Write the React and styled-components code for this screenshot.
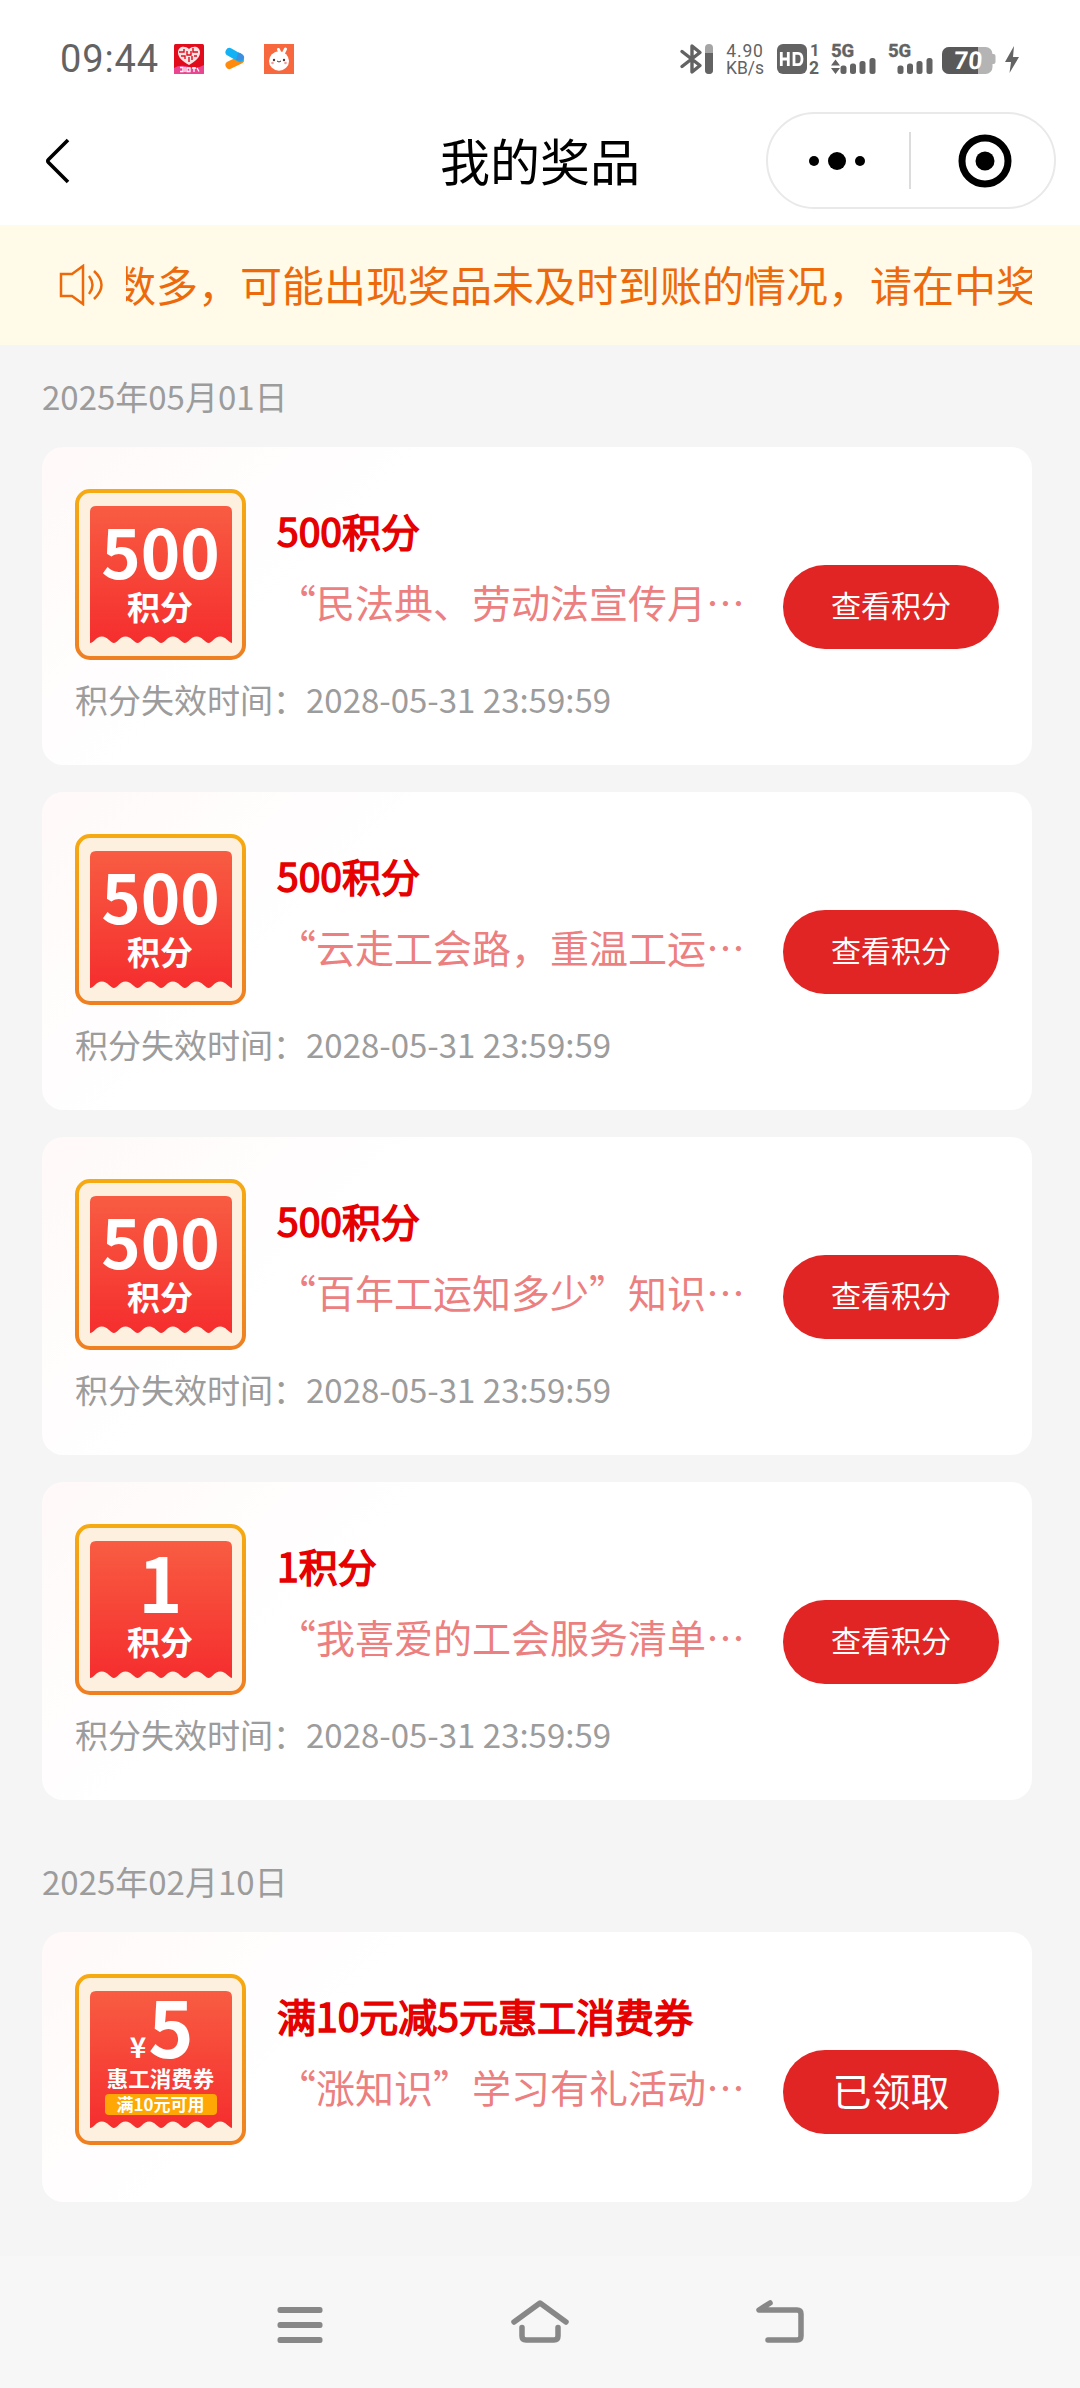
import styled, { createGlobalStyle, css } from 'styled-components';

const GlobalStyle = createGlobalStyle`
    * {
        box-sizing: border-box;
    }

    body {
        margin: 0;
        background-color: #f5f5f5;
        font-family: 'Noto Sans CJK SC', 'Noto Sans', sans-serif;
    }
`

const Page = styled.div`
    width: 1080px;
    height: 2388px;
    display: flex;
    flex-direction: column;
    overflow: hidden;
    background-color: #f5f5f5;
`

const StatusBar = styled.div`
    height: 96px;
    padding: 23px 61px 0 60px;
    display: flex;
    justify-content: space-between;
    background-color: #fff;
    color: #636363;
    font-family: Roboto, sans-serif;
`

const StatusGroup = styled.div`
    height: 72px;
    display: flex;
    align-items: center;

    svg{
        display: block;
        flex: none;
        overflow: visible;
    }
`

const Clock = styled.div`
    width: 114px;
    font-size: 38px;
    line-height: 72px;
    letter-spacing: 0.9px;
`

const NetSpeed = styled.div`
    width: 44px;
    margin: 1px 10px 0 10px;
    text-align: center;
    font-size: 17.5px;
    line-height: 16.5px;
    white-space: nowrap;

    .num{
        letter-spacing: 0.8px;
    }
`

const Spacer = styled.div`
    width: ${props => props.$w}px;
`

const Header = styled.div`
    height: 129px;
    padding: 0 24px;
    display: grid;
    grid-template-columns: 1fr 200px 1fr;
    align-items: center;
    background-color: #fff;

    .title{
        font-size: 50px;
        line-height: 70px;
        padding-bottom: 4px;
        text-align: center;
        white-space: nowrap;
        color: #000;
    }

    .back{
        display: block;
        margin-left: 18px;
    }
`

const Capsule = styled.div`
    justify-self: end;
    width: 290px;
    height: 97px;
    display: flex;
    align-items: center;
    border: 2px solid #e9e9e9;
    border-radius: 49px;

    .half{
        flex: 1;
        display: flex;
        justify-content: center;
    }

    .more{
        padding-right: 2px;
    }

    .close{
        padding-left: 5px;
    }

    .line{
        width: 2px;
        height: 57px;
        background-color: #dcdcdc;
    }
`

const NoticeBar = styled.div`
    height: 120px;
    padding: 0 48px 0 58px;
    display: flex;
    align-items: center;
    background-color: #fffbe8;
    color: #ed6a0c;

    svg{
        flex: none;
        margin-right: 22px;
    }

    .wrap{
        flex: 1;
        min-width: 0;
        overflow: hidden;
    }

    .text{
        margin-left: -12px;
        font-size: 42px;
        line-height: 72px;
        padding-bottom: 2px;
        white-space: nowrap;
    }
`

const List = styled.div`
    flex: 1;
    padding: 0 48px 0 42px;
`

const DateTitle = styled.div`
    height: 102px;
    line-height: 102px;
    font-size: 33px;
    color: #9c9c9c;
`

const Group = styled.div`
    & + & {
        padding-top: 3px;
    }
`

const Card = styled.div`
    height: ${props => props.$short ? '270px' : '318px'};
    margin-bottom: 27px;
    padding: 42px 33px 0;
    border-radius: 21px;
    background: linear-gradient(135deg, #fff9f9 0%, #fff 30%);
`

const Row = styled.div`
    height: 171px;
    display: flex;

    > svg{
        flex: none;
    }
`

const Info = styled.div`
    width: 506px;
    padding: 16px 0 0 31px;
`

const PrizeName = styled.div`
    font-size: 39px;
    line-height: 50px;
    color: #e60000;
    -webkit-text-stroke: 1.5px #e60000;
    white-space: nowrap;
`

const Activity = styled.div`
    margin-top: 21px;
    font-size: 39px;
    line-height: 50px;
    color: #ec7f7f;
    white-space: nowrap;
`

const Button = styled.button`
    width: 216px;
    height: 84px;
    margin: 76px 0 0 31px;
    padding: 0 0 6px;
    border: none;
    border-radius: 42px;
    background-color: #e12525;
    color: #fff;
    font-family: inherit;
    ${props => props.$big ? css`font-size: 39px;` : css`font-size: 30px;`}
`

const Expire = styled.div`
    margin-top: 15px;
    font-size: 33px;
    line-height: 48px;
    color: #9c9c9c;
    white-space: nowrap;
`

const NavBar = styled.div`
    height: 132px;
    display: flex;
    padding: 0 180px;
    background-color: #f7f7f7;

    .item{
        flex: 1;
        display: flex;
        justify-content: center;
        padding-top: 40px;
    }
`

const groups = [
    {
        date: '2025年05月01日',
        prizes: [
            { point: '500', name: '500积分', activity: '“民法典、劳动法宣传月…', expire: '2028-05-31 23:59:59' },
            { point: '500', name: '500积分', activity: '“云走工会路，重温工运…', expire: '2028-05-31 23:59:59' },
            { point: '500', name: '500积分', activity: '“百年工运知多少”知识…', expire: '2028-05-31 23:59:59' },
            { point: '1', name: '1积分', activity: '“我喜爱的工会服务清单…', expire: '2028-05-31 23:59:59' },
        ],
    },
    {
        date: '2025年02月10日',
        prizes: [
            { coupon: '5', name: '满10元减5元惠工消费券', activity: '“涨知识”学习有礼活动…' },
        ],
    },
]

// torn lower edge of the ticket, drawn right to left
function ticketPath() {
    let d = 'M15 23 q0 -6 6 -6 h130 q6 0 6 6 V154'
    for (let i = 0; i < 6; i++) {
        d += ' c-4 -1 -6 -6.5 -11.8 -6.5 c-5.8 0 -8 6.5 -11.87 6.5'
    }
    return d + ' Z'
}

function Badge({ point, coupon }) {
    return (
        <svg width="171" height="171" viewBox="0 0 171 171" fill="#fff" fontWeight="700" textAnchor="middle">
            <defs>
                <linearGradient id="edge" x1="0" y1="0" x2="0" y2="1">
                    <stop offset="0" stopColor="#f6aa12" />
                    <stop offset="1" stopColor="#ef8022" />
                </linearGradient>
                <linearGradient id="ticket" x1="0" y1="0" x2="0" y2="1">
                    <stop offset="0" stopColor="#f85c42" />
                    <stop offset="1" stopColor="#f52e2e" />
                </linearGradient>
            </defs>
            <rect x="2" y="2" width="167" height="167" rx="13" fill="#fdf0df" stroke="url(#edge)" strokeWidth="4" />
            <path d={ticketPath()} fill="url(#ticket)" />
            {coupon ? <>
                <text x="63" y="84" fontSize="28">¥</text>
                <text x="96" y="84" fontSize="77">{coupon}</text>
                <text x="85.5" y="112.500" fontSize="21.5">惠工消费券</text>
                <rect x="30" y="120" width="112" height="21" rx="4" fill="#fea705" />
                <text x="85.5" y="136.5" fontSize="17">满10元可用</text>
            </> : <>
                <text x="85.5" y={point === '1' ? 89 : 90} fontSize={point === '1' ? 75 : 67}>{point}</text>
                <text x="85" y="131" fontSize="33">积分</text>
            </>}
        </svg>
    )
}

function Prize({ item }) {
    return (
        <Card $short={!item.expire}>
            <Row>
                <Badge point={item.point} coupon={item.coupon} />
                <Info>
                    <PrizeName>{item.name}</PrizeName>
                    <Activity>{item.activity}</Activity>
                </Info>
                <Button $big={!!item.coupon}>{item.coupon ? '已领取' : '查看积分'}</Button>
            </Row>
            {item.expire && <Expire>积分失效时间：{item.expire}</Expire>}
        </Card>
    )
}

function AppIcons() {
    return (
        <svg width="122" height="32" viewBox="0 0 122 32">
            <rect x="0" y="1" width="30" height="30" rx="1.5" fill="#e20b1b" />
            <path d="M0 25 Q6 21 15 24 Q24 26 30 22 V29.5 Q30 31 28.5 31 H1.5 Q0 31 0 29.5z" fill="#ea4590" />
            <path d="M15 22 C8 18 4 14 4 9.500 C4 3 11 2 15 6 C19 2 26 3 26 9.500 C26 14 22 18 15 22z" fill="#fbe3e3" />
            <path d="M5 9h5v-3 M19 5v4h5 M13 8v4h4v-4 M7 13h4v3 M18 13v4 M23 13h-3 M15 14v5" stroke="#e20b1b" strokeWidth="1.4" fill="none" />
            <path d="M6 24.500h3v4H6 M11 24v5 M13 25h3v3.500h-3z M18 25h4 M20 24v5 M23 25l2 3.500" stroke="#fff" strokeWidth="1.3" fill="none" />
            <path d="M55.5 22 L66 17" stroke="#ff8a0c" strokeWidth="8" strokeLinecap="round" />
            <path d="M55.5 9 L66 15" stroke="#13b2f5" strokeWidth="8" strokeLinecap="round" />
            <path d="M62 17 Q70 19 69.9 14 Q69 10 64 9.5z" fill="#3c8fe0" />
            <rect x="90" y="1" width="30" height="30" fill="#f8683f" />
            <path d="M106 10 L104.5 6.5 M109.5 10 L111.5 6" stroke="#fff" strokeWidth="3" strokeLinecap="round" />
            <ellipse cx="105" cy="18" rx="10" ry="9.7" fill="#fff" />
            <circle cx="100" cy="17" r="1.2" fill="#4b3a36" />
            <circle cx="110" cy="17" r="1.2" fill="#4b3a36" />
            <path d="M103 18q2 2 4 0" stroke="#4b3a36" strokeWidth="1" fill="none" />
            <circle cx="98.5" cy="20" r="1.3" fill="#f79a9a" />
            <circle cx="111.5" cy="20" r="1.3" fill="#f79a9a" />
        </svg>
    )
}

function Signal({ arrows }) {
    return (
        <svg width="45" height="32" viewBox="0 0 45 32" fill="#636363">
            <text x="0" y="14.3" fontSize="18.5" fontWeight="700" stroke="#636363" strokeWidth="0.4">5G</text>
            {arrows && <path d="M0 22.5 L4.5 16.5 L9 22.5z M0 25 L4.5 31 L9 25z" />}
            <rect x="9.5" y="22.5" width="6" height="8.5" rx="2.5" />
            <rect x="19" y="20.5" width="6" height="10.5" rx="2.5" />
            <rect x="28.5" y="18" width="6" height="13" rx="2.5" />
            <rect x="38.5" y="15" width="6" height="16" rx="2.5" />
        </svg>
    )
}

function StatusIcons() {
    return (
        <StatusGroup>
            <svg width="33" height="32" viewBox="0 0 33 32">
                <path d="M2 8.5 L20 22.5 L12 29 V3 L20 9.5 L2 23.500" fill="none" stroke="#636363" strokeWidth="3.4" strokeLinejoin="round" strokeLinecap="round" />
                <rect x="25" y="1" width="8" height="30" rx="4" fill="#a5a5a5" />
                <path d="M25 10h8v17a4 4 0 0 1-8 0z" fill="#636363" />
            </svg>
            <NetSpeed>
                <div className='num'>4.90</div>
                <div>KB/s</div>
            </NetSpeed>
            <svg width="44" height="32" viewBox="0 0 44 32" fill="#636363" fontWeight="700">
                <rect x="0" y="1" width="30" height="30" rx="6" />
                <path d="M4.3 9v14M4.3 16h7M11.3 9v14M17 10.3h4q4 0 4 5.7t-4 5.7h-4z" fill="none" stroke="#fff" strokeWidth="2.8" />
                <text x="33" y="13" fontSize="16.5">1</text>
                <text x="32" y="31" fontSize="17.5">2</text>
            </svg>
            <Spacer $w={10} />
            <Signal arrows />
            <Spacer $w={12} />
            <Signal />
            <Spacer $w={9} />
            <svg width="54" height="32" viewBox="0 0 54 32">
                <path d="M50 11 h1.5 q2 0 2 2 v6 q0 2 -2 2 H50z" fill="#b4b4b4" />
                <rect x="0" y="4" width="50.5" height="27" rx="7" fill="#b4b4b4" />
                <path d="M7 4h29v27H7a7 7 0 0 1-7-7V11a7 7 0 0 1 7-7z" fill="#595959" />
                <text x="27.5" y="26.5" fontSize="24.5" fontWeight="700" fill="#fff" textAnchor="middle" transform="skewX(-4)">70</text>
            </svg>
            <Spacer $w={9} />
            <svg width="14" height="32" viewBox="0 0 14 32">
                <path d="M9 3 L0 19 H6 L4.5 30 L14 14 H8z" fill="#636363" />
            </svg>
        </StatusGroup>
    )
}

export default function App() {
    return (
        <Page lang="zh-CN">
            <GlobalStyle />
            <StatusBar>
                <StatusGroup>
                    <Clock>09:44</Clock>
                    <AppIcons />
                </StatusGroup>
                <StatusIcons />
            </StatusBar>
            <Header>
                <svg className='back' width="30" height="48" viewBox="0 0 30 48">
                    <path d="M26 3 L6.5 22.5 Q5 24 6.5 25.5 L26 45" fill="none" stroke="#000" strokeWidth="3.6" />
                </svg>
                <div className='title'>我的奖品</div>
                <Capsule>
                    <div className='half more'>
                        <svg width="58" height="20" viewBox="0 0 58 20">
                            <circle cx="6" cy="10" r="5" />
                            <circle cx="29" cy="10" r="9" />
                            <circle cx="52" cy="10" r="5" />
                        </svg>
                    </div>
                    <div className='line' />
                    <div className='half close'>
                        <svg width="54" height="54" viewBox="0 0 54 54">
                            <circle cx="27" cy="27" r="23" fill="none" stroke="#000" strokeWidth="7" />
                            <circle cx="27" cy="27" r="9.5" />
                        </svg>
                    </div>
                </Capsule>
            </Header>
            <NoticeBar>
                <svg width="46" height="42" viewBox="0 0 46 42" fill="none" stroke="#ed6a0c" strokeWidth="2.5">
                    <path d="M3 10 H14 L25 2 V40 L14 32 H3z" />
                    <path d="M31 12 Q38 21 31 30" />
                    <path d="M36 7 Q51 21 36 35" />
                </svg>
                <div className='wrap'>
                    <div className='text'>数多，可能出现奖品未及时到账的情况，请在中奖</div>
                </div>
            </NoticeBar>
            <List>
                {groups.map(group => (
                    <Group key={group.date}>
                        <DateTitle>{group.date}</DateTitle>
                        {group.prizes.map((item, index) => <Prize key={index} item={item} />)}
                    </Group>
                ))}
            </List>
            <NavBar>
                <div className='item'>
                    <svg width="46" height="50" viewBox="0 0 46 50" fill="#888">
                        <rect x="0.5" y="11" width="45" height="6" rx="2.5" />
                        <rect x="0.5" y="26" width="45" height="6" rx="2.5" />
                        <rect x="0.5" y="41" width="45" height="6" rx="2.5" />
                    </svg>
                </div>
                <div className='item'>
                    <svg width="60" height="50" viewBox="0 0 60 50" fill="none" stroke="#888" strokeWidth="5.5" strokeLinecap="round">
                        <path d="M4 26 L30 7 L56 26" strokeLinejoin="round" />
                        <path d="M12 31.5 V40 Q12 44 16 44 H44 Q48 44 48 40 V31.5" />
                    </svg>
                </div>
                <div className='item'>
                    <svg width="50" height="50" viewBox="0 0 50 50" fill="none" stroke="#888" strokeWidth="5.5" strokeLinecap="round" strokeLinejoin="round">
                        <path d="M15 7 L4 14 H42 Q46 14 46 18 V40 Q46 44 42 44 H13" />
                    </svg>
                </div>
            </NavBar>
        </Page>
    )
}
